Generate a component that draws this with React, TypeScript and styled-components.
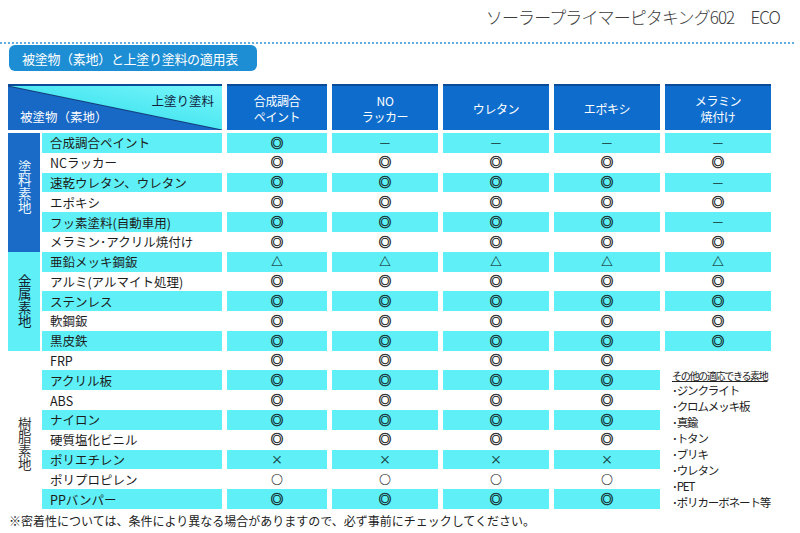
import styled, { createGlobalStyle } from 'styled-components';

const CYAN = '#5ef0f6';
const HEAD_BLUE = '#0e6dcc';
const DARK_BLUE = '#0a4a96';

type Mark = '◎' | '○' | '△' | '×' | '—';

type Row = { label: string; marks: Mark[] };

const ROWS: Row[] = [
	{ label: '合成調合ペイント', marks: ['◎', '—', '—', '—', '—'] },
	{ label: 'NCラッカー', marks: ['◎', '◎', '◎', '◎', '◎'] },
	{ label: '速乾ウレタン、ウレタン', marks: ['◎', '◎', '◎', '◎', '—'] },
	{ label: 'エポキシ', marks: ['◎', '◎', '◎', '◎', '◎'] },
	{ label: 'フッ素塗料(自動車用)', marks: ['◎', '◎', '◎', '◎', '—'] },
	{ label: 'メラミン･アクリル焼付け', marks: ['◎', '◎', '◎', '◎', '◎'] },
	{ label: '亜鉛メッキ鋼鈑', marks: ['△', '△', '△', '△', '△'] },
	{ label: 'アルミ(アルマイト処理)', marks: ['◎', '◎', '◎', '◎', '◎'] },
	{ label: 'ステンレス', marks: ['◎', '◎', '◎', '◎', '◎'] },
	{ label: '軟鋼鈑', marks: ['◎', '◎', '◎', '◎', '◎'] },
	{ label: '黒皮鉄', marks: ['◎', '◎', '◎', '◎', '◎'] },
	{ label: 'FRP', marks: ['◎', '◎', '◎', '◎'] },
	{ label: 'アクリル板', marks: ['◎', '◎', '◎', '◎'] },
	{ label: 'ABS', marks: ['◎', '◎', '◎', '◎'] },
	{ label: 'ナイロン', marks: ['◎', '◎', '◎', '◎'] },
	{ label: '硬質塩化ビニル', marks: ['◎', '◎', '◎', '◎'] },
	{ label: 'ポリエチレン', marks: ['×', '×', '×', '×'] },
	{ label: 'ポリプロピレン', marks: ['○', '○', '○', '○'] },
	{ label: 'PPバンパー', marks: ['◎', '◎', '◎', '◎'] },
];

const COATINGS = [['合成調合', 'ペイント'], ['NO', 'ラッカー'], ['ウレタン'], ['エポキシ'], ['メラミン', '焼付け']];

const OTHERS = ['ジンクライト', 'クロムメッキ板', '真鍮', 'トタン', 'ブリキ', 'ウレタン', 'PET', 'ポリカーボネート等'];

const App = () => {
	return (
		<Page>
			<GlobalStyle />
			<TitleBar>ソーラープライマーピタキング602　ECO</TitleBar>
			<SectionLabel>被塗物（素地）と上塗り塗料の適用表</SectionLabel>

			<HeaderGrid>
				<Corner>
					<CornerTop>上塗り塗料</CornerTop>
					<CornerBottom>被塗物（素地）</CornerBottom>
				</Corner>
				{COATINGS.map((lines) => (
					<HeadCell key={lines.join('')}>
						{lines.map((l) => (
							<HeadLine key={l}>{l}</HeadLine>
						))}
					</HeadCell>
				))}
			</HeaderGrid>

			<BodyGrid>
				<Category $from={1} $to={7} $variant="paint">塗料素地</Category>
				<Category $from={7} $to={12} $variant="metal">金属素地</Category>
				<Category $from={12} $to={20} $variant="resin">樹脂素地</Category>
				<SideNote>
					<NoteHeading>その他の適応できる素地</NoteHeading>
					{OTHERS.map((o) => (
						<NoteItem key={o}>･{o}</NoteItem>
					))}
				</SideNote>

				{ROWS.map((row, i) => (
					<RowGroup key={row.label}>
						<LabelCell $alt={i % 2 === 0}>{row.label}</LabelCell>
						{row.marks.map((m, j) => (
							<MarkCell key={j} $alt={i % 2 === 0} $double={m === '◎'}>
								{m}
							</MarkCell>
						))}
					</RowGroup>
				))}
			</BodyGrid>

			<Footnote>※密着性については、条件により異なる場合がありますので、必ず事前にチェックしてください。</Footnote>
		</Page>
	);
};

export default App;

const GlobalStyle = createGlobalStyle`
	html, body {
		margin: 0;
		padding: 0;
		background: #fff;
	}
	body {
		font-family: "Noto Sans CJK JP", "Noto Sans", sans-serif;
		color: #222;
	}
`;

const Page = styled.div`
	width: 800px;
	height: 533px;
	overflow: hidden;
	display: flex;
	flex-direction: column;
`;

const TitleBar = styled.div`
	height: 44px;
	box-sizing: border-box;
	margin-right: 6px;
	padding: 7px 14px 0 0;
	display: flex;
	justify-content: flex-end;
	font-size: 17px;
	letter-spacing: -0.9px;
	line-height: 20px;
	color: #3c3c3c;
	font-weight: 300;
	border-bottom: 2px dotted #62aee0;
`;

const SectionLabel = styled.div`
	margin: 1px 0 0 9px;
	width: 248px;
	height: 26px;
	box-sizing: border-box;
	padding-left: 13px;
	display: flex;
	align-items: center;
	background: #1e8ed4;
	border-radius: 6px;
	color: #fff;
	font-size: 13px;
	letter-spacing: -0.3px;
`;

const columns = `32px 177px 100px 106px 106px 106px 106px`;

const HeaderGrid = styled.div`
	margin: 13px 0 0 8px;
	display: grid;
	grid-template-columns: ${columns};
	column-gap: 5px;
	height: 45px;
`;

const Corner = styled.div`
	grid-column: 1 / 3;
	border-top: 2px solid ${DARK_BLUE};
	background: linear-gradient(
		to bottom left,
		#7af6fb 0%,
		#4ee8f2 calc(50% - 1px),
		#123c78 50%,
		#1868c6 calc(50% + 1px)
	);
	display: flex;
	flex-direction: column;
	justify-content: space-between;
	padding: 7px 8px 5px 12px;
	font-size: 12.5px;
	line-height: 16px;
`;

const CornerTop = styled.span`
	align-self: flex-end;
	color: #10223c;
`;

const CornerBottom = styled.span`
	align-self: flex-start;
	color: #fff;
`;

const HeadCell = styled.div`
	border-top: 2px solid ${DARK_BLUE};
	background: ${HEAD_BLUE};
	color: #fff;
	display: flex;
	flex-direction: column;
	align-items: center;
	justify-content: center;
	gap: 1px;
`;

const HeadLine = styled.span`
	font-size: 12px;
	line-height: 15px;
	letter-spacing: -0.4px;
`;

const BodyGrid = styled.div`
	margin: 4px 0 0 8px;
	display: grid;
	grid-template-columns: ${columns};
	grid-template-rows: repeat(19, 1fr);
	column-gap: 5px;
	height: 376px;
`;

const RowGroup = styled.div`
	display: contents;
`;

const categoryColors = {
	paint: { bg: '#1a6bc8', fg: '#eaf8ff', pad: '0 0 10px 0' },
	metal: { bg: CYAN, fg: '#152030', pad: '0' },
	resin: { bg: '#fff', fg: '#333', pad: '28px 0 0 0' },
};

const Category = styled.div<{ $from: number; $to: number; $variant: keyof typeof categoryColors }>`
	grid-column: 1;
	grid-row: ${(p) => p.$from} / ${(p) => p.$to};
	background: ${(p) => categoryColors[p.$variant].bg};
	color: ${(p) => categoryColors[p.$variant].fg};
	padding: ${(p) => categoryColors[p.$variant].pad};
	display: flex;
	align-items: center;
	justify-content: center;
	writing-mode: vertical-rl;
	text-orientation: upright;
	font-size: 13.5px;
	line-height: 1;
	letter-spacing: 0;
`;

const LabelCell = styled.div<{ $alt: boolean }>`
	grid-column: 2;
	margin-left: -3px;
	padding-left: 8px;
	display: flex;
	align-items: center;
	background: ${(p) => (p.$alt ? CYAN : '#fff')};
	font-size: 12.5px;
	color: #1c1c1c;
	white-space: nowrap;
`;

const MarkCell = styled.div<{ $alt: boolean; $double: boolean }>`
	display: flex;
	align-items: center;
	justify-content: center;
	background: ${(p) => (p.$alt ? CYAN : '#fff')};
	font-size: ${(p) => (p.$double ? '12.5px' : '11.5px')};
	color: ${(p) => (p.$alt ? '#173a3c' : '#333')};
	-webkit-text-stroke: ${(p) => (p.$double ? '0.6px' : '0.2px')} ${(p) => (p.$alt ? '#173a3c' : '#333')};
	line-height: 1;
`;

const SideNote = styled.div`
	grid-column: 7;
	grid-row: 12 / 20;
	padding: 18px 0 0 7px;
	display: flex;
	flex-direction: column;
`;

const NoteHeading = styled.span`
	font-size: 10px;
	letter-spacing: -1.3px;
	line-height: 13px;
	text-decoration: underline;
	color: #222;
`;

const NoteItem = styled.span`
	font-size: 11.5px;
	letter-spacing: -1.1px;
	line-height: 16px;
	color: #222;
	white-space: nowrap;
`;

const Footnote = styled.div`
	margin: 4px 0 0 9px;
	font-size: 12px;
	line-height: 16px;
	color: #222;
`;
